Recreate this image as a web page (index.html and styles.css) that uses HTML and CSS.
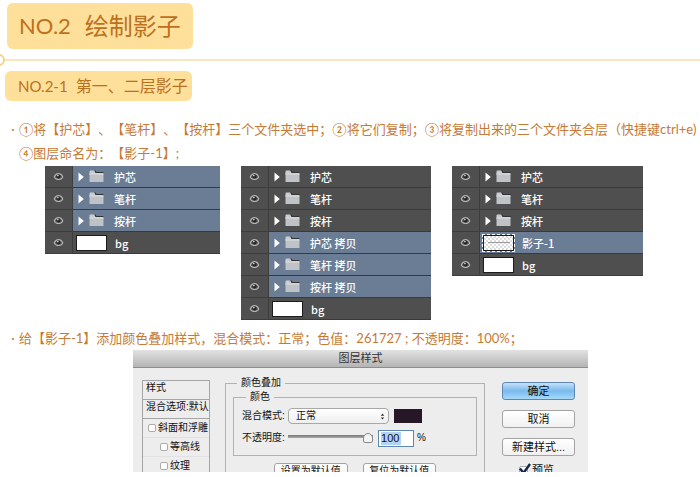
FILE: index.html
```html
<!DOCTYPE html>
<html lang="zh-CN">
<head>
  <title>绘制影子</title>
  <meta charset="UTF-8">
  <link rel="stylesheet" href="styles.css">
</head>
<body>
  <!-- 公用图标 -->
  <svg class="sprite" aria-hidden="true">
    <symbol id="eye" viewBox="0 0 12 10">
      <path d="M0.500 5.500C2 2 4 1 6 1s4 1 5.500 4.500C10 8 8 9 6 9S2 8 .5 5.500z" fill="#b4b4b4"/>
      <path d="M2 5.500C3 3.500 4.500 2.800 6 2.800s3 .7 4 2.700C9 7 7.500 7.700 6 7.700S3 7 2 5.500z" fill="#555"/>
      <circle cx="6" cy="4.800" r="2.300" fill="#262626"/>
      <circle cx="5.300" cy="4" r="0.900" fill="#ddd"/>
    </symbol>
    <symbol id="arrow" viewBox="0 0 6 10">
      <path d="M0.500 0.500v9L5.800 5z" fill="#fff"/>
    </symbol>
    <symbol id="folder" viewBox="0 0 15 13">
      <path d="M0.500 1.500q0-1 1-1h3.500l1.500 2h7.500v2H0.500z" fill="#c9cdd2"/>
      <path d="M5.500 0.500h1l1 1.500h7v1H6.500z" fill="#333"/>
      <path d="M0.500 3.500h14v8.500h-14z" fill="#bfc2c6"/>
      <path d="M0.500 3.500h14v1h-14z" fill="#dcdfe2"/>
    </symbol>
  </svg>

  <h1 class="title"><span class="no">NO.2</span><span>绘制影子</span></h1>
  <div class="divider"><span class="divider-dot"></span></div>
  <h2 class="subtitle"><span class="no">NO.2-1</span><span>第一、二层影子</span></h2>

  <p class="step">①将【护芯】、【笔杆】、【按杆】三个文件夹选中；②将它们复制；③将复制出来的三个文件夹合层（快捷键ctrl+e)<br>④图层命名为：【影子-1】;</p>

  <!-- 图层面板 -->
  <div class="panels">
    <ul class="layers">
      <li class="layer selected"><svg class="eye"><use href="#eye"/></svg><div class="layer-body"><svg class="arrow"><use href="#arrow"/></svg><svg class="folder"><use href="#folder"/></svg>护芯</div></li>
      <li class="layer selected"><svg class="eye"><use href="#eye"/></svg><div class="layer-body"><svg class="arrow"><use href="#arrow"/></svg><svg class="folder"><use href="#folder"/></svg>笔杆</div></li>
      <li class="layer selected"><svg class="eye"><use href="#eye"/></svg><div class="layer-body"><svg class="arrow"><use href="#arrow"/></svg><svg class="folder"><use href="#folder"/></svg>按杆</div></li>
      <li class="layer"><svg class="eye"><use href="#eye"/></svg><div class="layer-body"><span class="thumb"></span>bg</div></li>
    </ul>
    <ul class="layers">
      <li class="layer"><svg class="eye"><use href="#eye"/></svg><div class="layer-body"><svg class="arrow"><use href="#arrow"/></svg><svg class="folder"><use href="#folder"/></svg>护芯</div></li>
      <li class="layer"><svg class="eye"><use href="#eye"/></svg><div class="layer-body"><svg class="arrow"><use href="#arrow"/></svg><svg class="folder"><use href="#folder"/></svg>笔杆</div></li>
      <li class="layer"><svg class="eye"><use href="#eye"/></svg><div class="layer-body"><svg class="arrow"><use href="#arrow"/></svg><svg class="folder"><use href="#folder"/></svg>按杆</div></li>
      <li class="layer selected"><svg class="eye"><use href="#eye"/></svg><div class="layer-body"><svg class="arrow"><use href="#arrow"/></svg><svg class="folder"><use href="#folder"/></svg>护芯 拷贝</div></li>
      <li class="layer selected"><svg class="eye"><use href="#eye"/></svg><div class="layer-body"><svg class="arrow"><use href="#arrow"/></svg><svg class="folder"><use href="#folder"/></svg>笔杆 拷贝</div></li>
      <li class="layer selected"><svg class="eye"><use href="#eye"/></svg><div class="layer-body"><svg class="arrow"><use href="#arrow"/></svg><svg class="folder"><use href="#folder"/></svg>按杆 拷贝</div></li>
      <li class="layer"><svg class="eye"><use href="#eye"/></svg><div class="layer-body"><span class="thumb"></span>bg</div></li>
    </ul>
    <ul class="layers">
      <li class="layer"><svg class="eye"><use href="#eye"/></svg><div class="layer-body"><svg class="arrow"><use href="#arrow"/></svg><svg class="folder"><use href="#folder"/></svg>护芯</div></li>
      <li class="layer"><svg class="eye"><use href="#eye"/></svg><div class="layer-body"><svg class="arrow"><use href="#arrow"/></svg><svg class="folder"><use href="#folder"/></svg>笔杆</div></li>
      <li class="layer"><svg class="eye"><use href="#eye"/></svg><div class="layer-body"><svg class="arrow"><use href="#arrow"/></svg><svg class="folder"><use href="#folder"/></svg>按杆</div></li>
      <li class="layer selected"><svg class="eye"><use href="#eye"/></svg><div class="layer-body"><span class="thumb shadow-thumb"></span>影子-1</div></li>
      <li class="layer"><svg class="eye"><use href="#eye"/></svg><div class="layer-body"><span class="thumb"></span>bg</div></li>
    </ul>
  </div>

  <p class="step">给【影子-1】添加颜色叠加样式，混合模式：正常；色值：261727 ; 不透明度：100%；</p>

  <!-- 图层样式对话框 -->
  <div class="dialog">
    <div class="dialog-title">图层样式</div>
    <div class="dialog-body">
      <div class="style-list">
        <div class="style-row">样式</div>
        <div class="style-row">混合选项:默认</div>
        <label class="style-item"><input type="checkbox" class="check">斜面和浮雕</label>
        <label class="style-item sub"><input type="checkbox" class="check">等高线</label>
        <label class="style-item sub"><input type="checkbox" class="check">纹理</label>
      </div>

      <fieldset class="group">
        <legend>颜色叠加</legend>
        <fieldset class="group inner">
          <legend>颜色</legend>
          <div class="field">
            <label for="blend">混合模式:</label>
            <div class="select-wrap">
              <select id="blend"><option>正常</option></select>
              <svg class="select-arrows" viewBox="0 0 5 8"><path d="M2.500 0.500L4.500 3H0.500zM2.500 7.500L4.500 5H0.500z" fill="#333"/></svg>
            </div>
            <button class="swatch" aria-label="颜色"></button>
          </div>
          <div class="field">
            <label for="opacity">不透明度:</label>
            <input type="range" class="slider" value="100" aria-label="不透明度">
            <input type="text" id="opacity" class="number" value="100">
            <span>%</span>
          </div>
        </fieldset>
        <div class="defaults">
          <button class="btn">设置为默认值</button>
          <button class="btn">复位为默认值</button>
        </div>
      </fieldset>

      <div class="actions">
        <button class="btn primary">确定</button>
        <button class="btn">取消</button>
        <button class="btn">新建样式...</button>
        <label class="preview">
          <input type="checkbox" class="check" checked>
          <svg class="tick" viewBox="0 0 14 12"><path d="M2 5.500l3.500 4.500L12 1" fill="none" stroke="#14264e" stroke-width="2.400"/></svg>
          预览
        </label>
      </div>
    </div>
  </div>
</body>
</html>
```

FILE: styles.css
```css
body {
  margin: 0;
  padding-top: 3px;
  font-family: "Liberation Sans", "Noto Sans CJK SC", sans-serif;
  background: #fff;
  color: #c67a35;
  overflow: hidden;
}

.sprite {
  display: none;
}

/* 标题 */
.title,
.subtitle {
  display: flex;
  box-sizing: border-box;
  width: fit-content;
  margin: 0;
  font-family: Lato, "Noto Sans CJK SC", sans-serif;
  font-weight: 400;
  background: #fee09a;
  color: #bd701f;
  white-space: nowrap;
}

.title {
  gap: 14px;
  margin-left: 7px;
  padding: 0 12px;
  border-radius: 6px;
  font-size: 24px;
  line-height: 46px;
}

.title .no {
  font-size: 22px;
}

.subtitle {
  gap: 8px;
  margin-left: 5px;
  padding: 0 4px 0 13px;
  border-radius: 6px;
  font-size: 16px;
  line-height: 30px;
}

.subtitle .no {
  font-size: 15px;
}

.divider {
  display: flex;
  align-items: center;
  height: 22px;
}

.divider::after {
  content: "";
  flex: 1;
  height: 2px;
  background: #f8e6bd;
}

.divider-dot {
  width: 8px;
  height: 8px;
  margin-left: -7px;
  border: 2px solid #f0d48c;
  border-radius: 50%;
}

/* 步骤文字 */
.step {
  margin: 0 0 0 7px;
  padding-left: 12px;
  font-family: Lato, "Noto Sans CJK SC", sans-serif;
  font-size: 13px;
  font-weight: 400;
  line-height: 24px;
  white-space: nowrap;
  text-spacing-trim: space-all;
}

.step::before {
  content: "·";
  display: inline-block;
  width: 12px;
  margin-left: -12px;
  text-align: center;
}

.subtitle + .step {
  margin-top: 16px;
}

/* 图层面板 */
.panels {
  display: grid;
  grid-template-columns: 175fr 190fr 191fr;
  gap: 21px;
  align-items: start;
  margin: 1px 57px 6px 45px;
}

.layers {
  margin: 0;
  padding: 0;
  list-style: none;
  background: #4f4f4f;
  color: #fff;
  font-family: "Noto Sans CJK SC", sans-serif;
  font-size: 11px;
  font-weight: 500;
}

.layer {
  display: flex;
  height: 22px;
}

.layer > .eye {
  box-sizing: border-box;
  flex: none;
  width: 28px;
  height: 22px;
  padding: 6px 8px;
  border-right: 1px solid #3d3d3d;
  border-bottom: 1px solid #3d3d3d;
}

.layer-body {
  flex: 1;
  display: flex;
  align-items: center;
  padding-left: 5px;
  border-bottom: 1px solid #3a3a3a;
  line-height: 20px;
}

.selected .layer-body {
  background: #6b7d95;
}

.arrow {
  width: 6px;
  height: 10px;
  margin-right: 5px;
}

.folder {
  width: 15px;
  height: 13px;
  margin-right: 10px;
}

.thumb {
  box-sizing: border-box;
  width: 31px;
  height: 16px;
  margin: 0 8px 0 -2px;
  border: 1px solid #1c1c1c;
  background: #fff;
}

.shadow-thumb {
  outline: 1px dashed #fff;
  background: linear-gradient(#999, #999) center / 22px 1px no-repeat,
    repeating-conic-gradient(#ddd 0 25%, #fff 0 50%) 0 0 / 4px 4px;
}

/* 对话框 */
.dialog {
  width: 65%;
  max-height: 122px;
  margin-left: 19%;
  overflow: hidden;
  background: #ededed;
  color: #111;
  font-family: "Liberation Sans", "Noto Sans CJK SC", sans-serif;
  font-size: 10px;
  line-height: 14px;
}

.dialog-title {
  border-bottom: 1px solid #8d8d8d;
  background: linear-gradient(#e2e2e2, #b4b4b4);
  color: #333;
  font-size: 11px;
  line-height: 17px;
  text-align: center;
}

.dialog-body {
  display: flex;
  align-items: flex-start;
  padding: 8px 13px 0 9px;
}

.dialog input,
.dialog select,
.dialog button {
  box-sizing: border-box;
  margin: 0;
  padding: 0;
  font: inherit;
  color: inherit;
}

.style-list {
  box-sizing: border-box;
  flex: none;
  width: 68px;
  height: 110px;
  margin-top: 4px;
  border: 1px solid #a5a5a5;
  white-space: nowrap;
}

.style-row {
  padding: 0 0 4px 3px;
  border-bottom: 1px solid #a5a5a5;
}

.style-item {
  display: flex;
  align-items: center;
  gap: 2px;
  height: 18px;
  padding-left: 5px;
  border-bottom: 1px solid #e2e2e2;
}

.style-item.sub {
  padding-left: 17px;
}

.check {
  appearance: none;
  flex: none;
  width: 8px;
  height: 8px;
  border: 1px solid #aaa;
  border-radius: 2px;
  background: #fff;
}

.group {
  flex: 1;
  min-width: 0;
  margin: 0 17px 0 15px;
  padding: 0 7px;
  border: 1px solid #b2b2b2;
}

.group legend {
  margin-left: 4px;
  padding: 0 4px;
}

.group.inner {
  margin: 0;
  padding: 1px 8px 6px;
}

.field {
  display: flex;
  align-items: center;
  height: 22px;
}

.field label {
  flex: none;
  width: 46px;
}

.select-wrap {
  position: relative;
  flex: 1;
}

.select-wrap select {
  display: block;
  appearance: none;
  width: 100%;
  height: 16px;
  padding-left: 7px;
  border: 1px solid #a8a8a8;
  border-radius: 4px;
  background: linear-gradient(#fff, #efefef);
}

.select-arrows {
  position: absolute;
  top: 5px;
  right: 4px;
  width: 5px;
  height: 7px;
}

.field .swatch {
  width: 28px;
  height: 14px;
  margin: 0 46px 0 5px;
  border: 0;
  background: #261727;
}

.slider {
  appearance: none;
  flex: 1;
  min-width: 0;
  height: 14px;
  background: linear-gradient(#777, #aaa) 0 4px / 100% 3px no-repeat;
}

.slider::-webkit-slider-thumb {
  appearance: none;
  width: 10px;
  height: 10px;
  border: 1px solid #888;
  border-radius: 5px 5px 2px 2px;
  background: #f4f4f4;
}

.field .number {
  width: 36px;
  height: 17px;
  margin: 0 3px 0 5px;
  padding-left: 2px;
  border: 1px solid #5e87b0;
  background: linear-gradient(#b3d3f3, #b3d3f3) 2px 1px / 20px 13px no-repeat #fff;
  font-size: 11px;
}

.field .number + span {
  margin-right: 42px;
}

.defaults {
  display: flex;
  gap: 15px;
  margin: 7px 41px 0;
}

.defaults .btn {
  flex: 1;
}

/* 按钮 */
.btn {
  height: 18px;
  border: 1px solid #a3a3a3;
  border-radius: 3px;
  background: linear-gradient(#fff, #f1f1f1);
  white-space: nowrap;
}

.defaults .btn {
  height: 16px;
}

.btn.primary {
  border-color: #5e86b4;
  background: linear-gradient(#c6e2f8, #7ab9ee 50%, #a6dafa);
}

.actions {
  flex: none;
  display: flex;
  flex-direction: column;
  width: 73px;
  gap: 10px;
  padding-top: 6px;
  font-size: 11px;
}

.preview {
  position: relative;
  display: flex;
  align-items: center;
  gap: 4px;
  margin-top: -3px;
  padding-left: 17px;
}

.preview .check {
  width: 9px;
  height: 9px;
}

.tick {
  position: absolute;
  top: 0;
  left: 16px;
  width: 14px;
  height: 12px;
}
```
